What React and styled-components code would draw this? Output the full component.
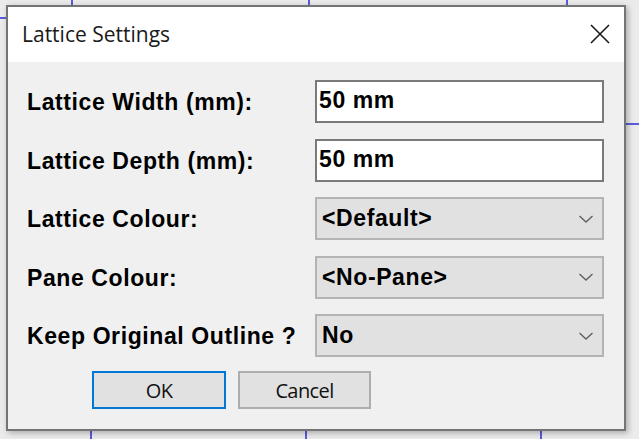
import React from "react";
import styled, { createGlobalStyle } from "styled-components";

const Global = createGlobalStyle`
  html, body { margin: 0; padding: 0; }
  body { background: #ebebeb; }
`;

const Desktop = styled.div`
  position: relative;
  width: 639px;
  height: 439px;
  overflow: hidden;
  background: #ebebeb;
  padding: 5px 0 0 6px;
  box-sizing: border-box;
`;

const Canvas = styled.svg`
  position: absolute;
  left: 0;
  top: 0;
  width: 639px;
  height: 439px;
`;

const Window = styled.div`
  position: relative;
  width: 620px;
  height: 426px;
  box-sizing: border-box;
  border: 2px solid #747474;
  background: #f0f0f0;
  box-shadow: 2px 2px 6px rgba(0, 0, 0, 0.28);
  display: flex;
  flex-direction: column;
`;

const TitleBar = styled.div`
  height: 55px;
  background: #ffffff;
  display: flex;
  align-items: center;
  justify-content: space-between;
  padding: 0 12px 0 14px;
  flex-shrink: 0;
`;

const Title = styled.span`
  font-family: "Open Sans", "Noto Sans", sans-serif;
  font-size: 21px;
  color: #1a1a1a;
  margin-top: -2px;
`;

const CloseButton = styled.div`
  width: 24px;
  height: 24px;
  display: flex;
  align-items: center;
  justify-content: center;
  margin-top: -2px;
`;

const Body = styled.div`
  flex: 1;
  padding: 18px 20px 0 19px;
  display: flex;
  flex-direction: column;
`;

const Form = styled.div`
  display: grid;
  grid-template-columns: 288px 289px;
  grid-auto-rows: 43px;
  row-gap: 15.5px;
`;

const boldText = `
  font-family: "Liberation Sans", Arial, sans-serif;
  font-weight: bold;
  font-size: 23px;
  letter-spacing: 0.6px;
  color: #000;
`;

const Label = styled.div`
  ${boldText}
  display: flex;
  align-items: center;
  white-space: nowrap;
  padding-top: 2px;
`;

const TextField = styled.div`
  ${boldText}
  box-sizing: border-box;
  border: 2px solid #7a7a7a;
  background: #ffffff;
  display: flex;
  align-items: center;
  padding: 0 0 2px 2px;
`;

const Select = styled.div`
  ${boldText}
  box-sizing: border-box;
  border: 2px solid #b4b4b4;
  background: #e1e1e1;
  display: flex;
  align-items: center;
  justify-content: space-between;
  padding: 0 8px 0 5px;
`;

const Buttons = styled.div`
  display: flex;
  gap: 12px;
  margin-top: 14px;
  padding-left: 65px;
`;

const Button = styled.div`
  box-sizing: border-box;
  width: ${(p) => p.$w}px;
  height: 38px;
  border: 2px solid ${(p) => (p.$primary ? "#0078d7" : "#adadad")};
  background: #e1e1e1;
  display: flex;
  align-items: center;
  justify-content: center;
  font-family: "Open Sans", "Noto Sans", sans-serif;
  font-size: 20px;
  letter-spacing: -0.6px;
  color: #111;
`;

const Chevron = () => (
  <svg width="16" height="10" viewBox="0 0 16 10">
    <polyline points="1.5,2 8,8 14.5,2" fill="none" stroke="#606060" strokeWidth="1.4" />
  </svg>
);

export default function App() {
  return (
    <>
      <Global />
      <Desktop>
        <Canvas viewBox="0 0 639 439">
          <g stroke="#2b2bd8" strokeWidth="1.5">
            <line x1="72" y1="0" x2="72" y2="6" />
            <line x1="309" y1="0" x2="309" y2="6" />
            <line x1="567" y1="0" x2="567" y2="6" />
            <line x1="0" y1="18" x2="6" y2="18" />
            <line x1="626" y1="124" x2="639" y2="124" />
            <line x1="91" y1="431" x2="91" y2="439" />
            <line x1="306" y1="431" x2="306" y2="439" />
            <line x1="541" y1="431" x2="541" y2="439" />
          </g>
        </Canvas>
        <Window>
          <TitleBar>
            <Title>Lattice Settings</Title>
            <CloseButton>
              <svg width="20" height="20" viewBox="0 0 20 20">
                <path d="M1 1 L19 19 M19 1 L1 19" stroke="#1a1a1a" strokeWidth="1.6" fill="none" />
              </svg>
            </CloseButton>
          </TitleBar>
          <Body>
            <Form>
              <Label>Lattice Width (mm):</Label>
              <TextField>50 mm</TextField>
              <Label>Lattice Depth (mm):</Label>
              <TextField>50 mm</TextField>
              <Label>Lattice Colour:</Label>
              <Select>
                <span>&lt;Default&gt;</span>
                <Chevron />
              </Select>
              <Label>Pane Colour:</Label>
              <Select>
                <span>&lt;No-Pane&gt;</span>
                <Chevron />
              </Select>
              <Label>Keep Original Outline ?</Label>
              <Select>
                <span>No</span>
                <Chevron />
              </Select>
            </Form>
            <Buttons>
              <Button $primary $w={134}>OK</Button>
              <Button $w={133}>Cancel</Button>
            </Buttons>
          </Body>
        </Window>
      </Desktop>
    </>
  );
}
